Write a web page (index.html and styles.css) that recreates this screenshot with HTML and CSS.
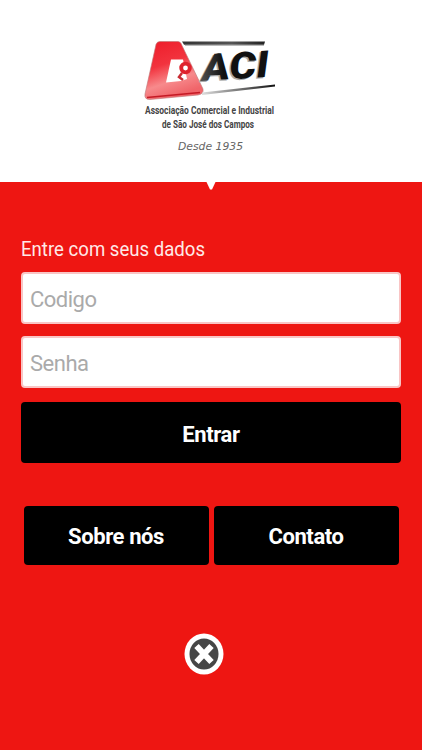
FILE: index.html
```html
<!DOCTYPE html>
<html lang="pt-BR">
<head>
<meta charset="utf-8">
<title>ACI</title>
<link rel="stylesheet" href="styles.css">
</head>
<body>
<header class="header">
<svg class="logo" viewBox="135 30 150 130" role="img" aria-label="ACI">
  <defs>
    <linearGradient id="red" x1="0" y1="0" x2="0.35" y2="1">
      <stop offset="0" stop-color="#ed1b29"/><stop offset=".45" stop-color="#f2333e"/><stop offset=".75" stop-color="#f78a8c"/><stop offset="1" stop-color="#f0656a"/>
    </linearGradient>
    <linearGradient id="bar"><stop offset="0" stop-color="#333"/><stop offset=".6" stop-color="#555"/><stop offset="1" stop-color="#222"/></linearGradient>
    <linearGradient id="fade"><stop offset="0" stop-color="#ddd"/><stop offset=".5" stop-color="#777"/><stop offset="1" stop-color="#111"/></linearGradient>
    <linearGradient id="ink"><stop offset="0" stop-color="#555"/><stop offset=".35" stop-color="#111"/></linearGradient>
  </defs>
  <path d="M160 41.500H178Q180 41.500 181 43.500L203 89Q204 94 198 95L150 99.500Q144 99.500 145 94L156 44.500Q157 41.500 160 41.500Z" fill="url(#red)" stroke="#b77" stroke-width=".6"/>
  <path d="M147 97.500L200 92.500" stroke="#c51a25" stroke-width="1.500" fill="none"/>
  <path d="M171 59.500H183L187 79L181 81L166 82.500Z" fill="#fff"/>
  <path d="M182 73L179 77L183 80" fill="none" stroke="#c92c34" stroke-width="2.500"/>
  <circle cx="185.500" cy="68" r="4.300" fill="#fff" stroke="#df222d" stroke-width="3.800"/>
  <path d="M182 41.500H265L264 44.800H184Z" fill="url(#bar)"/>
  <path d="M185 45.500H264" stroke="#bbb" stroke-width="1"/>
  <path d="M202 92.500L275 84.500V86.500L202 95Z" fill="url(#fade)"/>
  <g class="aci" transform="rotate(-3.500 203 81)">
    <text x="201" y="82" textLength="67" lengthAdjust="spacingAndGlyphs" fill="#aaa">ACI</text>
    <text x="202.500" y="80.800" textLength="67" lengthAdjust="spacingAndGlyphs" fill="url(#ink)">ACI</text>
  </g>
  <text class="association" x="145" y="114.300" textLength="129" lengthAdjust="spacingAndGlyphs">Associação Comercial e Industrial</text>
  <text class="association" x="162" y="127.500" textLength="92" lengthAdjust="spacingAndGlyphs">de São José dos Campos</text>
  <text class="since" x="178" y="150" textLength="65" lengthAdjust="spacingAndGlyphs">Desde 1935</text>
</svg>
<svg class="notch" viewBox="0 0 10 9"><path d="M0 0H10L6 8.500H4Z" fill="#fff"/></svg>
</header>
<main class="main">
  <form class="form">
    <p class="title">Entre com seus dados</p>
    <input class="field" type="text" placeholder="Codigo">
    <input class="field" type="password" placeholder="Senha">
    <button class="button enter" type="button">Entrar</button>
  </form>
  <div class="links">
    <button class="button" type="button">Sobre nós</button>
    <button class="button" type="button">Contato</button>
  </div>
  <button class="close" type="button" aria-label="Fechar">
    <svg viewBox="0 0 40 42"><ellipse cx="20" cy="21" rx="19.500" ry="20.500" fill="#fff"/><ellipse cx="20" cy="21" rx="14.500" ry="15.500" fill="#464646"/><path d="M12.500 13L27.500 29M27.500 13L12.500 29" stroke="#fff" stroke-width="6"/></svg>
  </button>
</main>
</body>
</html>
```
FILE: styles.css
```css
* { box-sizing: border-box; }
body { margin: 0; background: #ee1612; font-family: Roboto, sans-serif; }
.header { position: relative; height: 182px; padding-top: 30px; background: #fff; }
.logo { display: block; width: 150px; height: 130px; margin-left: 135px; overflow: visible; }
.notch { position: absolute; top: 181px; left: 206px; width: 10px; height: 9px; }
.aci { font: italic 900 37px Roboto, sans-serif; }
.association { font: 700 11.5px Roboto, sans-serif; fill: #444; }
.since { font: italic 500 10.5px "DejaVu Sans", sans-serif; fill: #666; }
.main { height: 568px; padding: 54px 21px 0; }
.form { display: flex; flex-direction: column; }
.title { margin: 0 0 10px; font-size: 20px; line-height: 26px; color: #ffe9e7; transform: scaleX(.93); transform-origin: left; }
.field { width: 100%; height: 52px; margin: 0 0 12px; padding: 3px 7px 0; border: 2px solid #f9c5c5; border-radius: 4px; background: #fff; font: 22px Roboto, sans-serif; letter-spacing: -.5px; }
.field::placeholder { color: #aaa; opacity: 1; }
.button { height: 59px; padding: 2px 0 0; border: 0; border-radius: 4px; background: #000; color: #fff; font: 700 22px Roboto, sans-serif; letter-spacing: -.4px; }
.enter { height: 61px; margin-top: 2px; padding-top: 3px; }
.links { display: grid; grid-template-columns: 1fr 1fr; gap: 5px; margin: 43px 2.5px 0; }
.close { display: block; width: 40px; height: 42px; margin: 68px 0 0 163px; padding: 0; border: 0; background: none; }
.close svg { display: block; width: 40px; height: 42px; }
```
